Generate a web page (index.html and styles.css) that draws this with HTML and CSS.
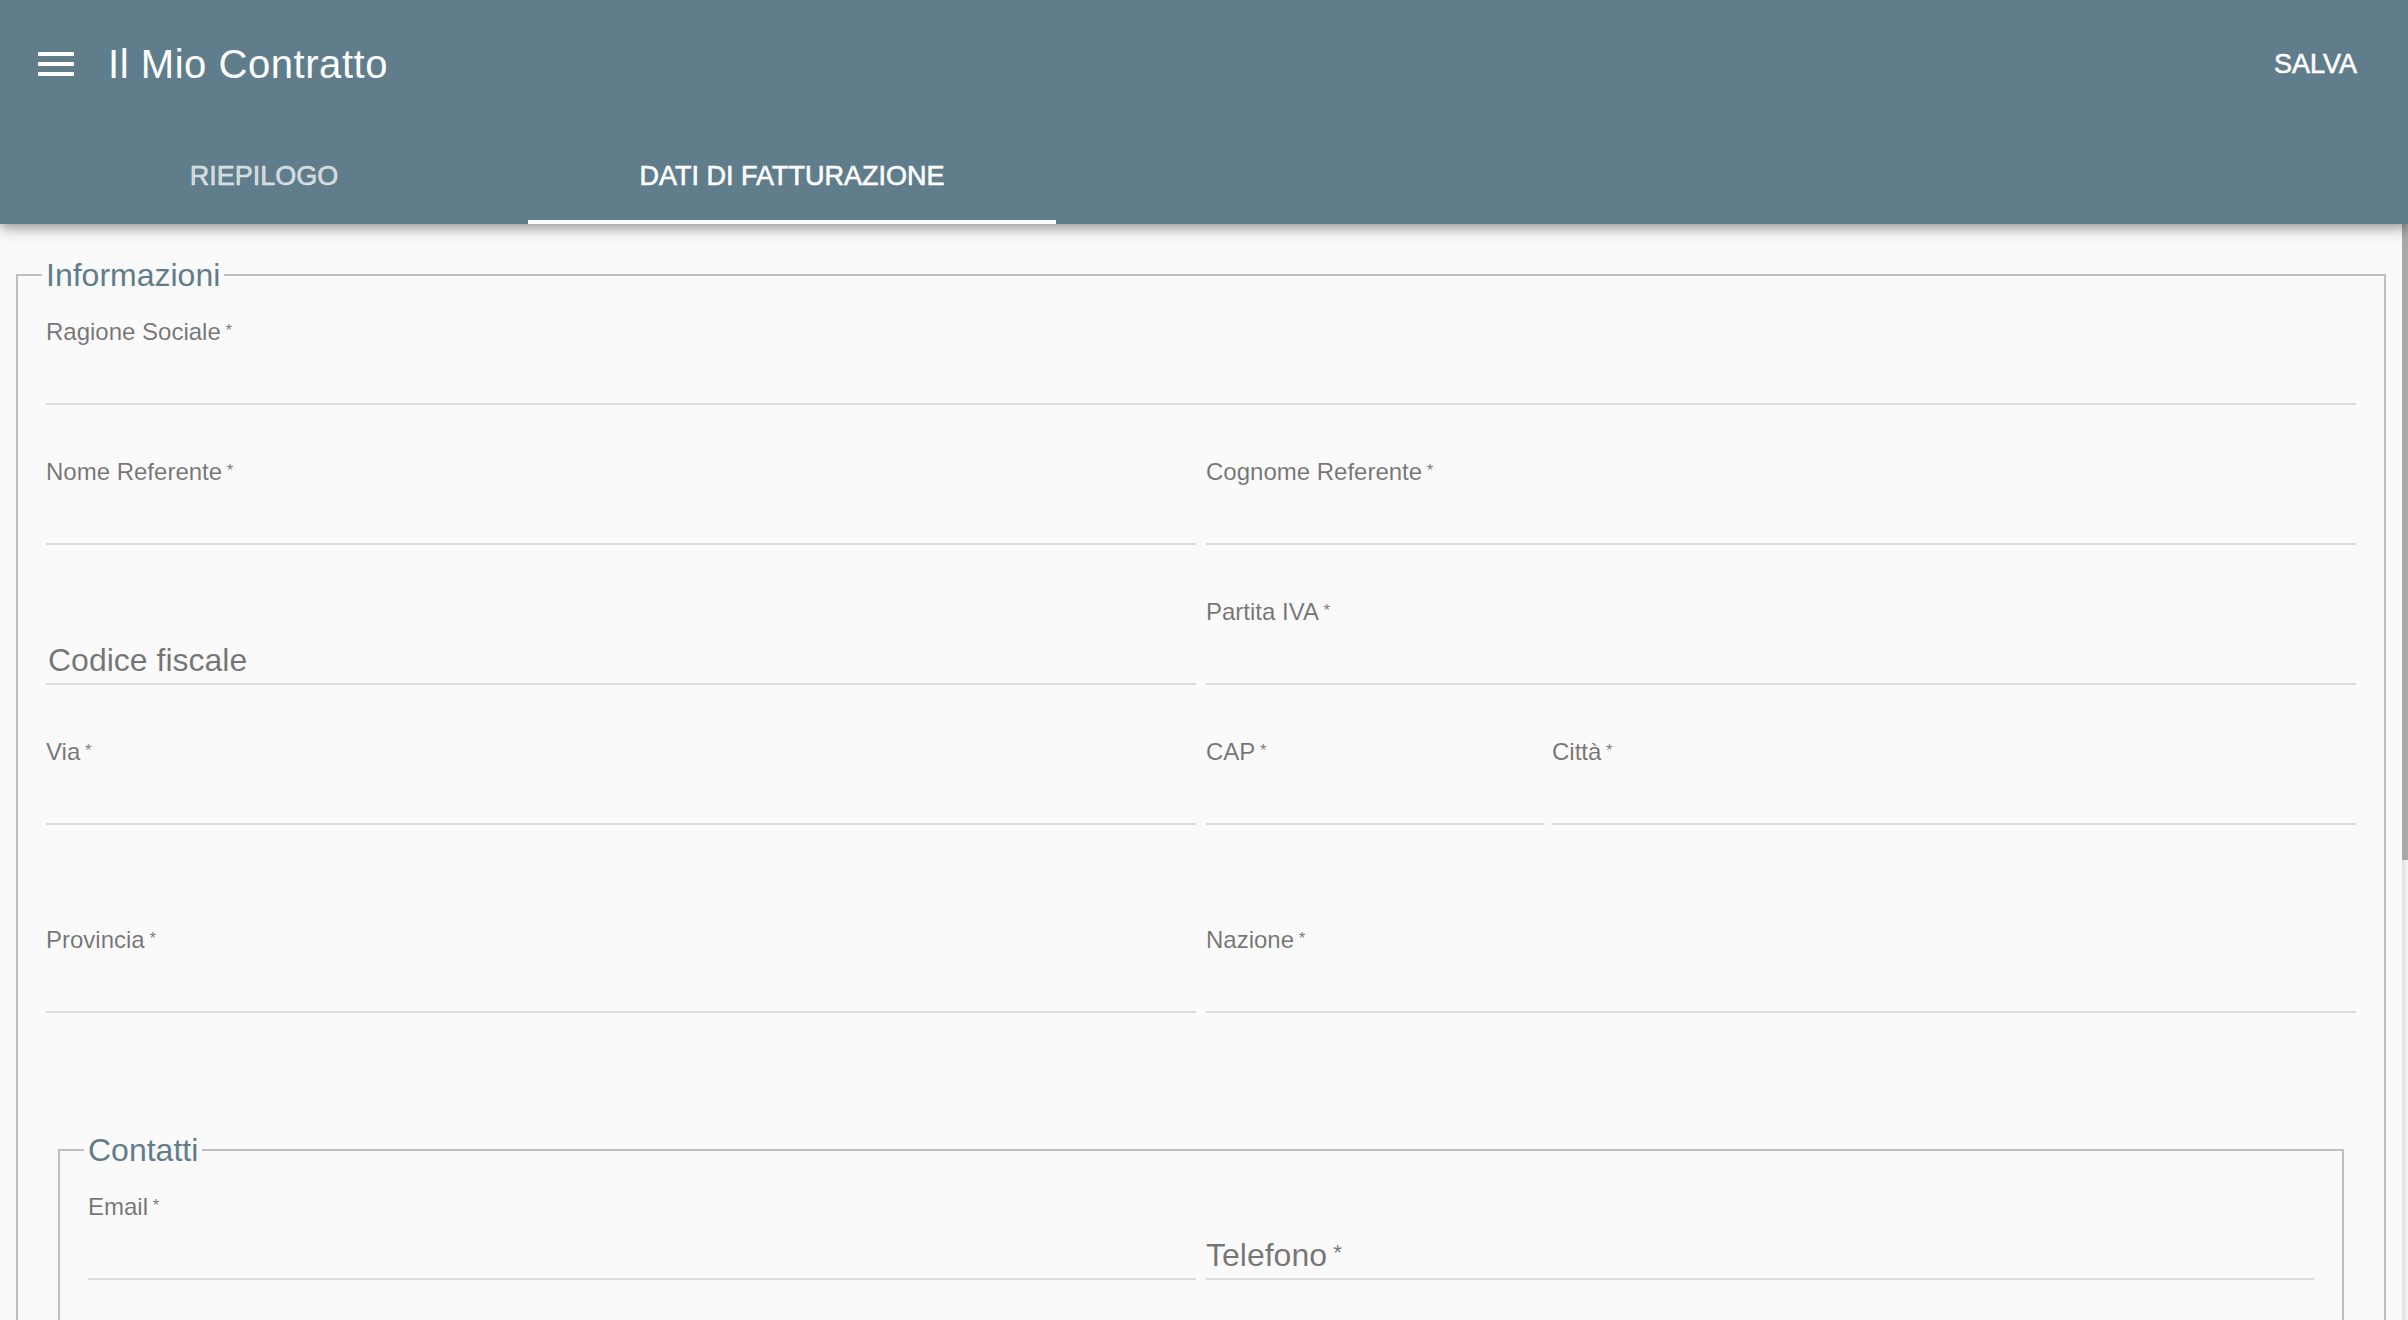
FILE: index.html
```html
<!DOCTYPE html>
<html lang="it">
<head>
    <meta charset="UTF-8">
    <meta name="viewport" content="width=device-width, initial-scale=1.0">
    <title>Il Mio Contratto</title>
    <link rel="stylesheet" href="styles.css">
</head>
<body>
    <header class="app-bar">
        <div class="toolbar">
            <button class="menu-btn" aria-label="Menu">
                <svg viewBox="0 0 24 24"><path d="M3 18h18v-2H3v2zm0-5h18v-2H3v2zm0-7v2h18V6H3z"/></svg>
            </button>
            <span class="title">Il Mio Contratto</span>
            <button class="save-btn">SALVA</button>
        </div>
        <nav class="tabs">
            <a class="tab" href="#">RIEPILOGO</a>
            <a class="tab active" href="#">DATI DI FATTURAZIONE</a>
        </nav>
    </header>

    <div class="page">
        <main class="content">
            <form class="billing-form">
                <fieldset class="group">
                    <legend>Informazioni</legend>

                    <div class="rows">
                        <div class="row single">
                            <div class="field">
                                <label class="field-label" for="ragione">Ragione Sociale<span class="req"> *</span></label>
                                <div class="field-control"><input id="ragione" type="text"></div>
                            </div>
                        </div>

                        <div class="row">
                            <div class="field">
                                <label class="field-label" for="nome">Nome Referente<span class="req"> *</span></label>
                                <div class="field-control"><input id="nome" type="text"></div>
                            </div>
                            <div class="field">
                                <label class="field-label" for="cognome">Cognome Referente<span class="req"> *</span></label>
                                <div class="field-control"><input id="cognome" type="text"></div>
                            </div>
                        </div>

                        <div class="row">
                            <div class="field">
                                <div class="field-label"></div>
                                <div class="field-control">
                                    <label class="inline-label indented" for="cf">Codice fiscale</label>
                                    <input id="cf" type="text">
                                </div>
                            </div>
                            <div class="field">
                                <label class="field-label" for="piva">Partita IVA<span class="req"> *</span></label>
                                <div class="field-control"><input id="piva" type="text"></div>
                            </div>
                        </div>

                        <div class="row spaced">
                            <div class="field">
                                <label class="field-label" for="via">Via<span class="req"> *</span></label>
                                <div class="field-control"><input id="via" type="text"></div>
                            </div>
                            <div class="split">
                                <div class="field">
                                    <label class="field-label" for="cap">CAP<span class="req"> *</span></label>
                                    <div class="field-control"><input id="cap" type="text"></div>
                                </div>
                                <div class="field">
                                    <label class="field-label" for="citta">Città<span class="req"> *</span></label>
                                    <div class="field-control"><input id="citta" type="text"></div>
                                </div>
                            </div>
                        </div>

                        <div class="row">
                            <div class="field">
                                <label class="field-label" for="provincia">Provincia<span class="req"> *</span></label>
                                <div class="field-control"><input id="provincia" type="text"></div>
                            </div>
                            <div class="field">
                                <label class="field-label" for="nazione">Nazione<span class="req"> *</span></label>
                                <div class="field-control"><input id="nazione" type="text"></div>
                            </div>
                        </div>
                    </div>

                    <fieldset class="group nested">
                        <legend>Contatti</legend>
                        <div class="rows">
                            <div class="row">
                                <div class="field">
                                    <label class="field-label" for="email">Email<span class="req"> *</span></label>
                                    <div class="field-control"><input id="email" type="email"></div>
                                </div>
                                <div class="field">
                                    <div class="field-label"></div>
                                    <div class="field-control">
                                        <label class="inline-label" for="tel">Telefono<span class="req"> *</span></label>
                                        <input id="tel" type="tel">
                                    </div>
                                </div>
                            </div>
                        </div>
                    </fieldset>
                </fieldset>
            </form>
        </main>
        <div class="scrollbar"><div class="thumb"></div></div>
    </div>
</body>
</html>
```

FILE: styles.css
```css
* {
    box-sizing: border-box;
}

html, body {
    margin: 0;
    height: 100%;
}

body {
    font-family: "Liberation Sans", Arial, Helvetica, sans-serif;
    background: #fafafa;
    display: flex;
    flex-direction: column;
    overflow: hidden;
}

/* app bar */

.app-bar {
    position: relative;
    z-index: 2;
    flex: 0 0 auto;
    background: #607d8b;
    color: #fff;
    box-shadow: 0 4px 8px -2px rgba(0, 0, 0, 0.2),
                0 8px 10px 0 rgba(0, 0, 0, 0.14),
                0 2px 20px 0 rgba(0, 0, 0, 0.12);
}

.toolbar {
    height: 128px;
    display: flex;
    align-items: center;
    padding: 0 19px 0 32px;
}

.menu-btn {
    width: 48px;
    height: 48px;
    padding: 0;
    border: 0;
    background: none;
    color: #fff;
    display: flex;
}

.menu-btn svg {
    width: 48px;
    height: 48px;
    fill: currentColor;
}

.title {
    flex: 1;
    margin-left: 28px;
    font-size: 40px;
    letter-spacing: 0.55px;
}

.save-btn {
    font-family: inherit;
    font-size: 27px;
    color: #fff;
    background: none;
    border: 0;
    height: 72px;
    padding: 0 32px;
    -webkit-text-stroke: 0.6px #fff;
}

.tabs {
    display: flex;
    height: 96px;
}

.tab {
    flex: 0 0 528px;
    display: flex;
    align-items: center;
    justify-content: center;
    font-size: 27px;
    color: rgba(255, 255, 255, 0.7);
    text-decoration: none;
    -webkit-text-stroke: 0.6px currentColor;
}

.tab.active {
    color: #fff;
    box-shadow: inset 0 -4px 0 #fff;
}

/* page */

.page {
    flex: 1;
    display: flex;
    min-height: 0;
}

.content {
    flex: 1;
    padding: 31px 16px 0;
    overflow: hidden;
}

.scrollbar {
    flex: 0 0 6px;
    background: linear-gradient(90deg, #dcdcdc, #f7f7f7);
}

.thumb {
    height: 636px;
    background: #a8a8a8;
}

/* form */

.group {
    margin: 0;
    min-width: 0;
    border: 2px solid #bfbfbf;
    padding: 20px 28px 40px;
}

.group legend {
    font-size: 32px;
    line-height: 40px;
    color: #607d8b;
    padding: 0 4px;
    margin-left: -4px;
}

.group.nested {
    margin: 117px 12px 0;
    padding-bottom: 160px;
}

.rows {
    display: flex;
    flex-direction: column;
    gap: 50px;
}

.row {
    display: grid;
    grid-template-columns: 1fr 1fr;
    column-gap: 10px;
}

.row.single {
    grid-template-columns: 1fr;
}

.row.spaced {
    margin-bottom: 48px;
}

.split {
    display: grid;
    grid-template-columns: 338fr 804fr;
    column-gap: 8px;
}

.field {
    display: flex;
    flex-direction: column;
    min-width: 0;
}

.field-label {
    height: 32px;
    font-size: 24px;
    line-height: 32px;
    color: rgba(0, 0, 0, 0.54);
    white-space: nowrap;
}

.field-control {
    height: 58px;
    display: flex;
    align-items: flex-end;
    border-bottom: 2px solid #dcdcdc;
}

.inline-label {
    font-size: 32px;
    line-height: 36px;
    padding-bottom: 5px;
    color: rgba(0, 0, 0, 0.54);
    white-space: nowrap;
}

.inline-label.indented {
    padding-left: 2px;
}

.field-control input {
    flex: 1;
    min-width: 0;
    height: 36px;
    margin-bottom: 3px;
    padding: 0;
    border: 0;
    outline: none;
    background: transparent;
    font-family: inherit;
    font-size: 32px;
    color: rgba(0, 0, 0, 0.87);
}

.req {
    font-size: 0.7em;
    vertical-align: 0.25em;
}
```
